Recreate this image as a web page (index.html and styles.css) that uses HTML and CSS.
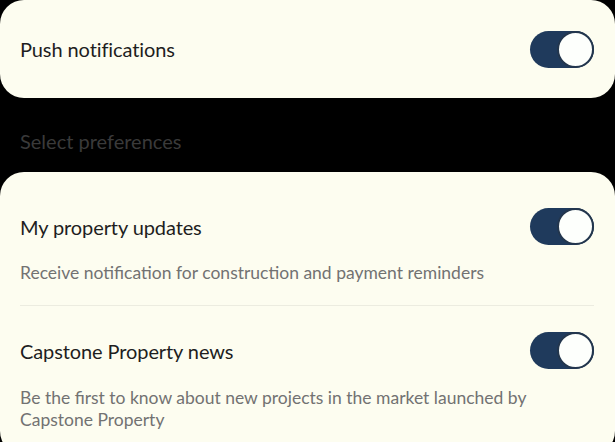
FILE: index.html
```html
<!DOCTYPE html>
<html>
<head>
<meta charset="utf-8">
<link rel="stylesheet" href="styles.css">
</head>
<body>
<div class="card card-top">
  <span class="title">Push notifications</span>
  <span class="toggle"><span class="knob"></span></span>
</div>
<div class="section-label">Select preferences</div>
<div class="card card-prefs">
  <div class="pref first">
    <div class="pref-head">
      <span class="title">My property updates</span>
      <span class="toggle"><span class="knob"></span></span>
    </div>
    <p class="desc">Receive notification for construction and payment reminders</p>
  </div>
  <div class="pref second">
    <div class="pref-head">
      <span class="title">Capstone Property news</span>
      <span class="toggle"><span class="knob"></span></span>
    </div>
    <p class="desc">Be the first to know about new projects in the market launched by Capstone Property</p>
  </div>
</div>
</body>
</html>
```
FILE: styles.css
```css
html, body {
  margin: 0;
  padding: 0;
  background: #000;
}
body {
  width: 615px;
  height: 442px;
  overflow: hidden;
  font-family: Lato, "Noto Sans", sans-serif;
}
.card {
  background: #fdfdf0;
  border-radius: 24px;
}
.card-top {
  height: 98px;
  box-sizing: border-box;
  padding: 0 21px 0 20px;
  display: flex;
  align-items: center;
  justify-content: space-between;
}
.title {
  font-size: 20px;
  color: #1e1e1e;
  letter-spacing: -0.1px;
}
.toggle {
  width: 64px;
  height: 37px;
  border-radius: 19px;
  background: #1f3a5c;
  display: flex;
  justify-content: flex-end;
  box-sizing: border-box;
}
.knob {
  width: 37px;
  height: 37px;
  box-sizing: border-box;
  border-radius: 50%;
  background: #fdfffc;
  border: 2px solid #23364d;
}
.section-label {
  padding: 31px 20px 18px;
  line-height: 25px;
  font-size: 20px;
  color: #3a3a3a;
}
.card-prefs {
  padding: 0 21px 0 20px;
  height: 283px;
  box-sizing: border-box;
}
.pref-head {
  display: flex;
  align-items: center;
  justify-content: space-between;
}
.pref.first {
  padding-top: 36px;
  padding-bottom: 21px;
  border-bottom: 1px solid #ecece0;
}
.pref.second {
  padding-top: 26px;
}
.desc {
  margin: 17px 0 0;
  font-size: 17.5px;
  line-height: 22px;
  color: #727272;
  padding-right: 50px;
}
.second .desc {
  margin-top: 18px;
}
```
